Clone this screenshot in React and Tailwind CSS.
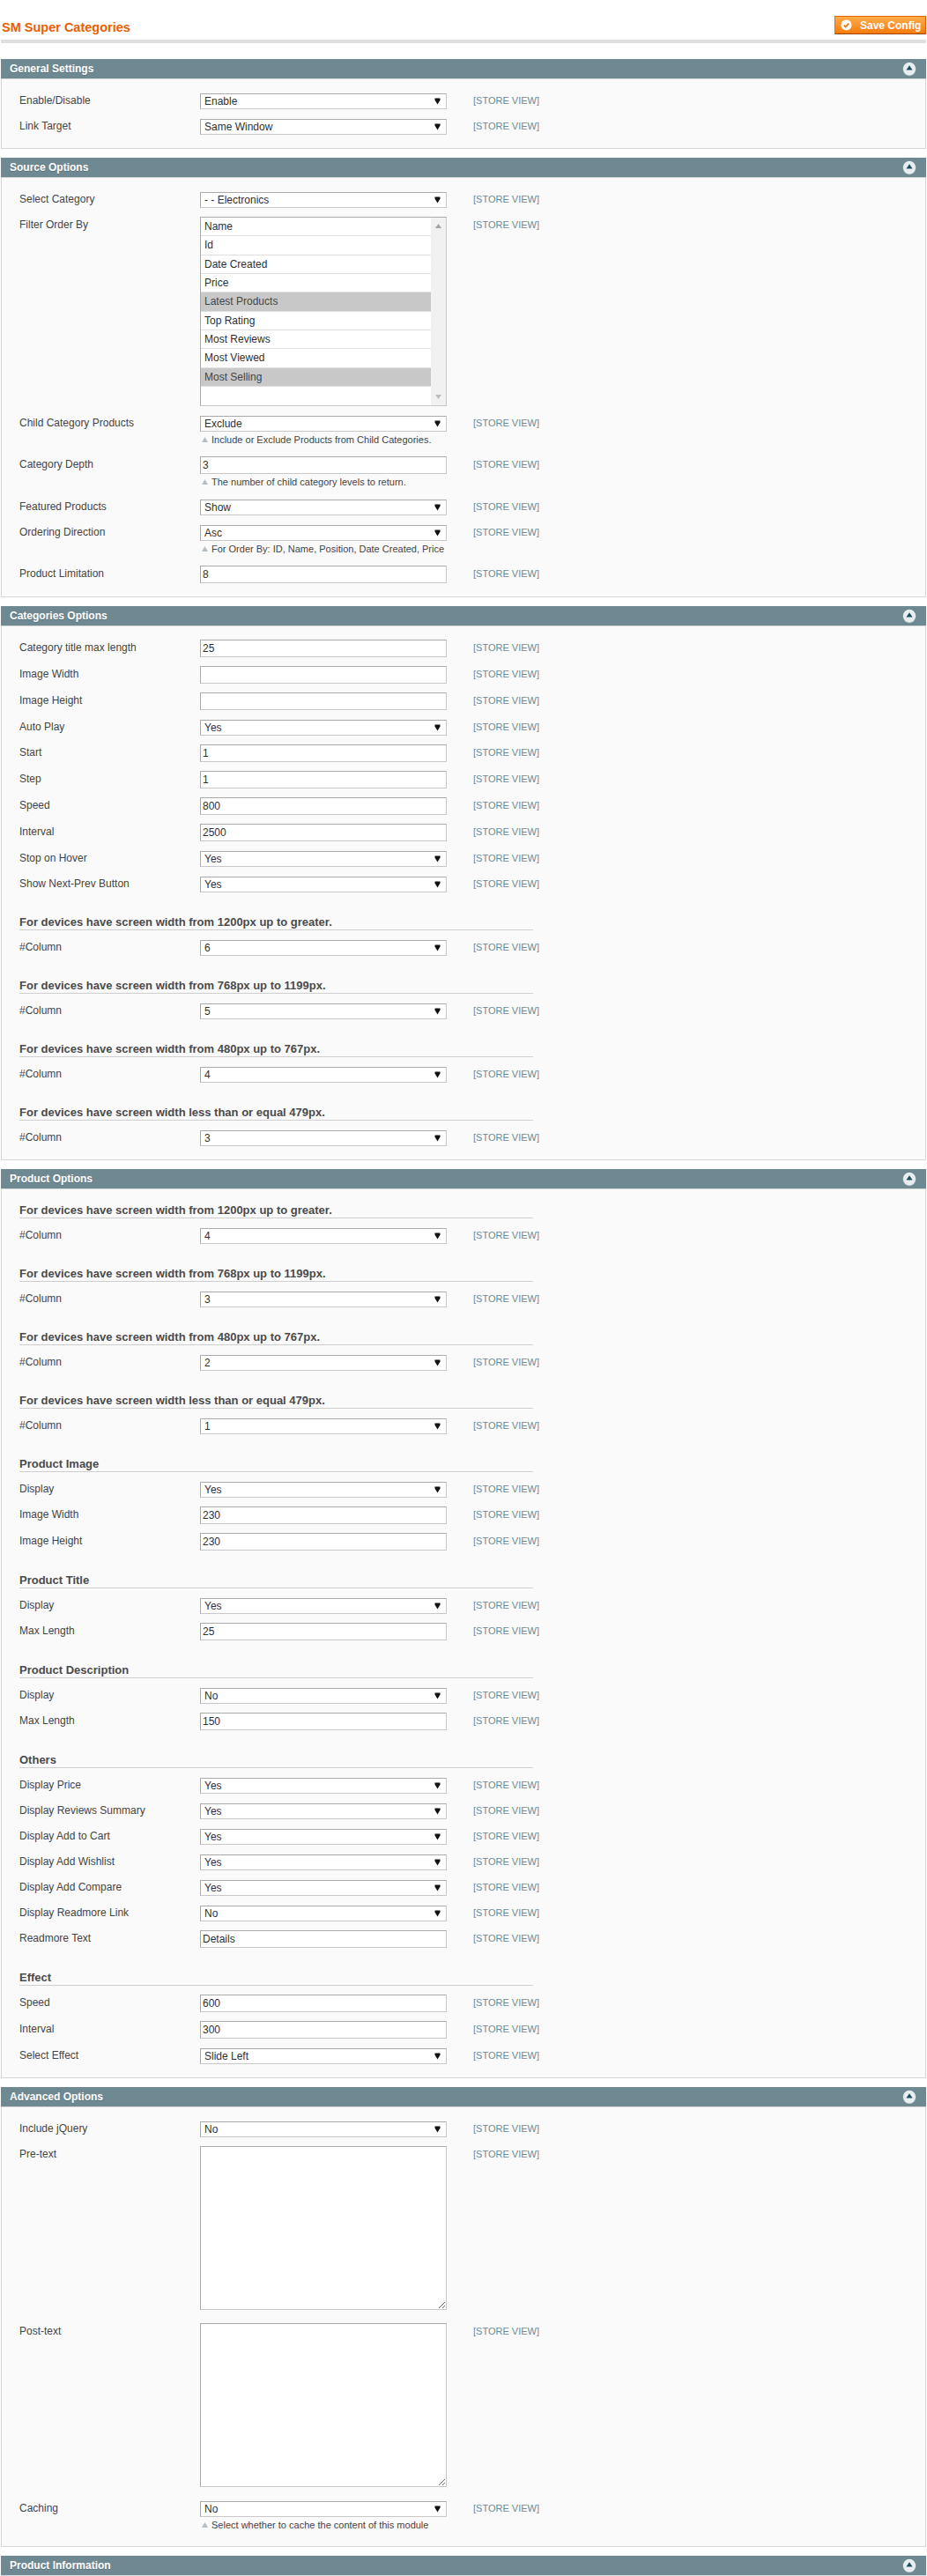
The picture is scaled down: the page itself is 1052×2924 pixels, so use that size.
const FONT = "font-['Liberation_Sans',Arial,sans-serif]";

const Arrow = () => (
  <svg className="pointer-events-none absolute right-[7px] top-[5px]" width="7" height="8" viewBox="0 0 7 8">
    <path d="M0.5 0.5H6.5V2.5L3.5 7.5L0.5 2.5Z" fill="#111" />
  </svg>
);

const Toggle = () => (
  <svg width="18" height="18" viewBox="0 0 18 18" className="shrink-0">
    <circle cx="9" cy="9.6" r="7.6" fill="#8fa4ab" />
    <circle cx="9" cy="9.8" r="7" fill="#dfe7ea" />
    <circle cx="9" cy="8.6" r="6.8" fill="#e9eff1" />
    <path d="M9 5.2L12.6 10.6H5.4Z" fill="#1f4e61" />
  </svg>
);

const Note = ({ children }) => (
  <div className="flex h-[18px] items-center text-[11px] leading-[18px] text-[#444] whitespace-nowrap">
    <svg width="7" height="6" viewBox="0 0 7 6" className="ml-[2px] mr-[4px] shrink-0">
      <path d="M3.5 0L7 6H0Z" fill="#b3bfc5" />
    </svg>
    {children}
  </div>
);

const Select = ({ value }) => (
  <div className="relative mt-[1px] h-[18px] w-[280px]">
    <select
      defaultValue={value}
      className="block h-[18px] w-[280px] appearance-none rounded-none border border-solid border-t-[#aaaaaa] border-l-[#aaaaaa] border-r-[#c8c8c8] border-b-[#c8c8c8] bg-white pl-[4px] pr-[16px] text-[12px] leading-[16px] text-[#2f2f2f] outline-none"
    >
      <option value={value}>{value}</option>
    </select>
    <Arrow />
  </div>
);

const Input = ({ value }) => (
  <input
    readOnly
    defaultValue={value}
    className="block h-[20px] w-[280px] rounded-none border border-solid border-t-[#aaaaaa] border-l-[#aaaaaa] border-r-[#c8c8c8] border-b-[#c8c8c8] bg-white px-[2px] text-[12px] leading-[16px] text-[#2f2f2f] outline-none"
  />
);

const Area = () => (
  <textarea
    readOnly
    className="block h-[186px] w-[280px] rounded-none border border-solid border-t-[#aaaaaa] border-l-[#aaaaaa] border-r-[#c8c8c8] border-b-[#c8c8c8] bg-white outline-none"
  />
);

const LIST = [
  ["Name", false],
  ["Id", false],
  ["Date Created", false],
  ["Price", false],
  ["Latest Products", true],
  ["Top Rating", false],
  ["Most Reviews", false],
  ["Most Viewed", false],
  ["Most Selling", true],
];

const ListBox = () => (
  <div className="flex h-[215px] w-[280px] border border-solid border-t-[#aaaaaa] border-l-[#aaaaaa] border-r-[#c8c8c8] border-b-[#c8c8c8] bg-white">
    <div className="min-w-0 flex-1">
      {LIST.map(([t, on]) => (
        <div
          key={t}
          className={
            on
              ? "box-border flex h-[21.33px] items-center border-b border-solid border-[#e0e0e0] bg-[#c8c8c8] pl-[4px] text-[12px] text-[#444]"
              : "box-border flex h-[21.33px] items-center border-b border-solid border-[#e0e0e0] pl-[4px] text-[12px] text-[#2f2f2f]"
          }
        >
          {t}
        </div>
      ))}
    </div>
    <div className="flex w-[17px] flex-col items-center justify-between bg-[#f1f1f1] py-[7px]">
      <svg width="7" height="5" viewBox="0 0 7 5"><path d="M3.5 0L7 5H0Z" fill="#a3a3a3" /></svg>
      <svg width="7" height="5" viewBox="0 0 7 5"><path d="M0 0H7L3.5 5Z" fill="#bdbdbd" /></svg>
    </div>
  </div>
);

const Row = ({ label, s, i, list, area, note, pb = "pb-[10px]" }) => (
  <div className={`flex items-start ${pb}`}>
    <div className="w-[205px] shrink-0 pt-[1px] text-[12px] leading-[16px] text-[#444]">{label}</div>
    <div className="w-[280px] shrink-0">
      {s !== undefined && <Select value={s} />}
      {i !== undefined && <Input value={i} />}
      {list && <ListBox />}
      {area && <Area />}
      {note && <Note>{note}</Note>}
    </div>
    <div className="ml-[30px] pt-[1px] text-[11px] leading-[16px] text-[#6f8992] whitespace-nowrap">[STORE VIEW]</div>
  </div>
);

const Heading = ({ children, first }) => (
  <div className={first ? "mb-[10px] w-[583px] border-b border-solid border-[#cfcfcf]" : "mb-[10px] mt-[15px] w-[583px] border-b border-solid border-[#cfcfcf]"}>
    <h4 className="text-[13px] font-bold leading-[17px] text-[#4a4a4a]">{children}</h4>
  </div>
);

const Section = ({ title, children, last }) => (
  <section className={last ? "" : "mb-[10px]"}>
    <div className="flex h-[22px] items-center justify-between bg-[#6f8992] pl-[10px] pr-[10px]">
      <span className="text-[12px] font-bold text-white [text-shadow:0_1px_0_#5c747c]">{title}</span>
      <Toggle />
    </div>
    {children && (
      <div className="border border-solid border-[#d6d6d6] bg-[#fafafa] pb-[5px] pl-[20px] pt-[15px]">{children}</div>
    )}
    {!children && <div className="h-[1px] bg-[#d6e0e4]" />}
  </section>
);

const H1200 = "For devices have screen width from 1200px up to greater.";
const H768 = "For devices have screen width from 768px up to 1199px.";
const H480 = "For devices have screen width from 480px up to 767px.";
const H479 = "For devices have screen width less than or equal 479px.";

export default function App() {
  return (
    <div className={`${FONT} bg-white px-[1px]`}>
      <header className="border-b-4 border-solid border-[#dfdfdf] pt-[18px] pb-[6px] mb-[18px] flex items-center justify-between">
        <h3 className="-mb-[3px] self-end pl-[1px] text-[14.5px] font-bold leading-[21px] text-[#eb5e00]">SM Super Categories</h3>
        <button className="flex h-[21px] w-[104px] items-center border border-solid border-t-[#ed6502] border-l-[#ed6502] border-r-[#d85a00] border-b-[#a04300] bg-gradient-to-b from-[#ffac47] to-[#f67a05] pl-[6px] text-[12px] font-bold text-white">
          <svg width="13" height="13" viewBox="0 0 13 13" className="mr-[9px] shrink-0">
            <circle cx="6.5" cy="6.5" r="6" fill="#fff" />
            <path d="M3.8 6.6L5.7 8.6L9.2 4.6" fill="none" stroke="#e8740f" strokeWidth="1.7" />
          </svg>
          Save Config
        </button>
      </header>

      <Section title="General Settings">
        <Row label="Enable/Disable" s="Enable" />
        <Row label="Link Target" s="Same Window" />
      </Section>

      <Section title="Source Options">
        <Row label="Select Category" s="- - Electronics" />
        <Row label="Filter Order By" list />
        <Row label="Child Category Products" s="Exclude" note="Include or Exclude Products from Child Categories." />
        <Row label="Category Depth" i="3" note="The number of child category levels to return." />
        <Row label="Featured Products" s="Show" />
        <Row label="Ordering Direction" s="Asc" note="For Order By: ID, Name, Position, Date Created, Price" />
        <Row label="Product Limitation" i="8" />
      </Section>

      <Section title="Categories Options">
        <Row label="Category title max length" i="25" />
        <Row label="Image Width" i="" />
        <Row label="Image Height" i="" />
        <Row label="Auto Play" s="Yes" />
        <Row label="Start" i="1" />
        <Row label="Step" i="1" />
        <Row label="Speed" i="800" />
        <Row label="Interval" i="2500" />
        <Row label="Stop on Hover" s="Yes" />
        <Row label="Show Next-Prev Button" s="Yes" />
        <Heading>{H1200}</Heading>
        <Row label="#Column" s="6" />
        <Heading>{H768}</Heading>
        <Row label="#Column" s="5" />
        <Heading>{H480}</Heading>
        <Row label="#Column" s="4" />
        <Heading>{H479}</Heading>
        <Row label="#Column" s="3" />
      </Section>

      <Section title="Product Options">
        <Heading first>{H1200}</Heading>
        <Row label="#Column" s="4" />
        <Heading>{H768}</Heading>
        <Row label="#Column" s="3" />
        <Heading>{H480}</Heading>
        <Row label="#Column" s="2" />
        <Heading>{H479}</Heading>
        <Row label="#Column" s="1" />
        <Heading>Product Image</Heading>
        <Row label="Display" s="Yes" />
        <Row label="Image Width" i="230" />
        <Row label="Image Height" i="230" />
        <Heading>Product Title</Heading>
        <Row label="Display" s="Yes" />
        <Row label="Max Length" i="25" />
        <Heading>Product Description</Heading>
        <Row label="Display" s="No" />
        <Row label="Max Length" i="150" />
        <Heading>Others</Heading>
        <Row label="Display Price" s="Yes" />
        <Row label="Display Reviews Summary" s="Yes" />
        <Row label="Display Add to Cart" s="Yes" />
        <Row label="Display Add Wishlist" s="Yes" />
        <Row label="Display Add Compare" s="Yes" />
        <Row label="Display Readmore Link" s="No" />
        <Row label="Readmore Text" i="Details" />
        <Heading>Effect</Heading>
        <Row label="Speed" i="600" />
        <Row label="Interval" i="300" />
        <Row label="Select Effect" s="Slide Left" />
      </Section>

      <Section title="Advanced Options">
        <Row label="Include jQuery" s="No" />
        <Row label="Pre-text" area pb="pb-[15px]" />
        <Row label="Post-text" area pb="pb-[15px]" />
        <Row label="Caching" s="No" note="Select whether to cache the content of this module" />
      </Section>

      <Section title="Product Information" last />
    </div>
  );
}
